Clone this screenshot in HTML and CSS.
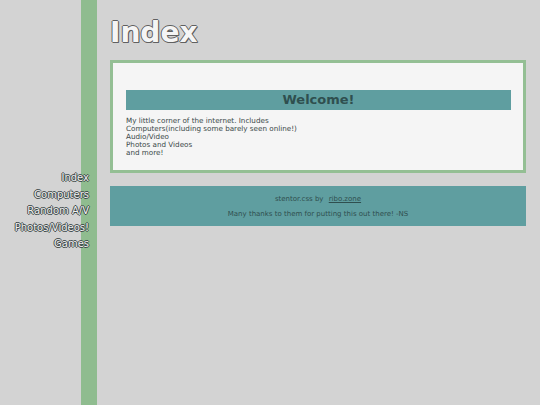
FILE: index.html
```html
<!DOCTYPE html>
<html>
<head>
<meta charset="utf-8">
<link rel="stylesheet" href="styles.css">
</head>
<body>
<div class="page">
  <aside class="sidebar">
    <nav class="nav">
      <a href="#">Index</a>
      <a href="#">Computers</a>
      <a href="#">Random A/V</a>
      <a href="#">Photos/Videos!</a>
      <a href="#">Games</a>
    </nav>
  </aside>
  <main class="main">
    <h1 class="title">Index</h1>
    <section class="card">
      <h2 class="welcome">Welcome!</h2>
      <p class="intro">My little corner of the internet. Includes<br>Computers(including some barely seen online!)<br>Audio/Video<br>Photos and Videos<br>and more!</p>
    </section>
    <footer class="footer">
      <p class="credit">stentor.css by <a href="#">ribo.zone</a></p>
      <p class="thanks">Many thanks to them for putting this out there! -NS</p>
    </footer>
  </main>
</div>
</body>
</html>
```
FILE: styles.css
```css
html, body {
  margin: 0;
  padding: 0;
  background: #d3d3d3;
  font-family: "DejaVu Sans", Verdana, sans-serif;
}
.page {
  display: flex;
  min-height: 405px;
}
.sidebar {
  width: 97px;
  flex: none;
  background: linear-gradient(to right, transparent 81px, #8fbc8f 81px);
}
.nav {
  display: flex;
  flex-direction: column;
  align-items: flex-end;
  padding-top: 170px;
  padding-right: 8px;
}
.nav a {
  font-size: 10px;
  line-height: 16.5px;
  color: #f0f0f0;
  text-decoration: none;
  text-shadow: 1px 0 0 #3c4848, -1px 0 0 #3c4848, 0 1px 0 #3c4848, 0 -1px 0 #3c4848;
}
.main {
  flex: 1;
  padding: 0 14px 0 13px;
}
.title {
  margin: 0;
  padding-top: 13px;
  padding-left: 0;
  font-size: 28px;
  line-height: 40px;
  font-weight: bold;
  color: #f5f5f5;
  text-shadow: 1px 0 0 #606060, -1px 0 0 #606060, 0 1px 0 #606060, 0 -1px 0 #606060, 1px 1px 0 #606060;
  height: 47px;
}
.card {
  margin-top: 0;
  border: 3px solid #94bf94;
  background: #f5f5f5;
  padding: 27px 12px 13px 13px;
}
.welcome {
  margin: 0;
  background: #5f9ea0;
  color: #2f4f4f;
  font-size: 13px;
  line-height: 20px;
  text-align: center;
  font-weight: bold;
}
.intro {
  margin: 7px 0 0;
  font-size: 7.2px;
  line-height: 8px;
  color: #3a4848;
}
.footer {
  margin-top: 13px;
  background: #5f9ea0;
  height: 40px;
  text-align: center;
  color: #2f4f4f;
  font-size: 7px;
  line-height: 8px;
  padding-top: 9px;
  box-sizing: border-box;
}
.footer p {
  margin: 0;
}
.footer .thanks {
  margin-top: 7px;
}
.footer a {
  color: #2f4f4f;
  margin-left: 3px;
}
```
